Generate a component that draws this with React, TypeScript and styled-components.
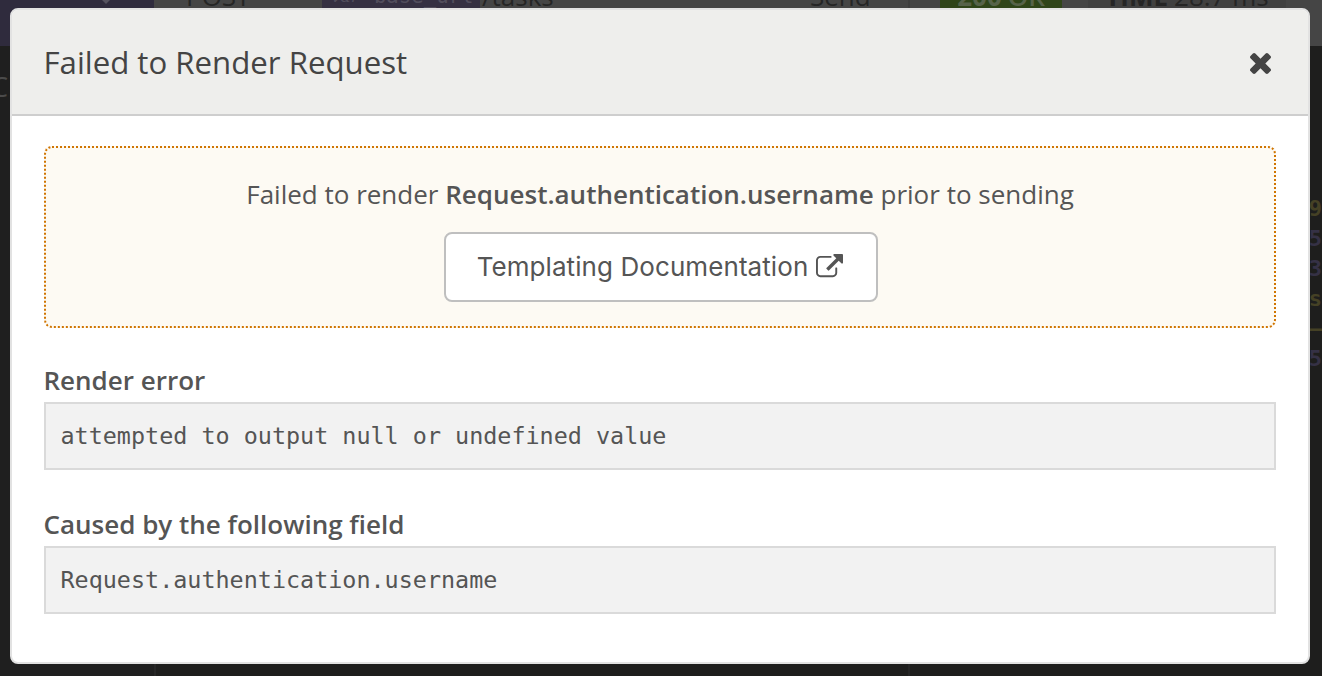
import React from 'react';
import styled, { createGlobalStyle } from 'styled-components';

const GlobalStyle = createGlobalStyle`
  * { box-sizing: border-box; }
  html, body { margin: 0; overflow: hidden; background: #1e1e1d; }
`;

const Screen = styled.div`
  position: relative;
  width: 1322px;
  height: 676px;
  overflow: hidden;
  font-family: 'Open Sans', 'Noto Sans', sans-serif;
  font-size: 26px;
  color: #555;
`;

const Workspace = styled.div`
  display: flex;
  flex-direction: column;
  height: 100%;
`;

const TopBar = styled.div`
  display: flex;
  flex: none;
  height: 98px;
  margin-top: -52px;
  background: #454545;
  color: #252525;
  white-space: nowrap;
`;

const BarCell = styled.div<{ $w: number; $bg?: string; $pad?: number }>`
  display: flex;
  flex: none;
  align-items: center;
  width: ${p => p.$w}px;
  padding-left: ${p => p.$pad ?? 0}px;
  padding-bottom: 2px;
  background: ${p => p.$bg ?? 'transparent'};
`;

const MenuCell = styled(BarCell)`
  padding-bottom: 0;
  padding-top: 6px;
`;

const SendCell = styled(BarCell)`
  border-right: 2px solid #3e3e3e;
`;

const Tag = styled.span`
  display: flex;
  flex: none;
  align-items: center;
  gap: 15px;
  width: 158px;
  height: 50px;
  padding-left: 9px;
  margin-right: 2px;
  background: #353042;
  color: #514d5c;
  font: 20.7px 'DejaVu Sans Mono', monospace;
`;

const TagKind = styled.i`
  font-family: 'DejaVu Serif', serif;
  font-size: 17px;
`;

const Badge = styled.span<{ $w: number; $bg: string; $fg: string }>`
  display: flex;
  flex: none;
  align-items: center;
  justify-content: center;
  gap: 6px;
  width: ${p => p.$w}px;
  height: 66px;
  background: ${p => p.$bg};
  color: ${p => p.$fg};
`;

const StatusText = styled.span`
  font-weight: 600;
`;

const Panes = styled.div`
  display: flex;
  flex: 1;
`;

const Sidebar = styled.div`
  width: 156px;
  padding-top: 22px;
  border-right: 2px solid #272727;
  background: #1f1f1f;
  color: #4b4b4b;
  font-size: 27px;
`;

const SidebarText = styled.div`
  margin-left: -9px;
`;

const Editor = styled.div`
  width: 754px;
  border-right: 2px solid #252525;
`;

const Response = styled.div`
  flex: 1;
  display: flex;
  flex-direction: column;
  align-items: flex-end;
  padding-top: 148px;
  font: bold 22px/30px 'DejaVu Sans Mono', monospace;
`;

const CodeEnd = styled.div<{ $fg: string }>`
  height: 30px;
  color: ${p => p.$fg};
`;

const Modal = styled.section`
  position: absolute;
  top: 8px;
  left: 10px;
  display: flex;
  flex-direction: column;
  width: 1300px;
  height: 656px;
  overflow: hidden;
  border: 2px solid #e2e2e2;
  border-radius: 8px;
  background: #fff;
`;

const ModalHeader = styled.header`
  display: flex;
  flex: none;
  align-items: center;
  justify-content: space-between;
  height: 106px;
  padding: 0 37px 0 31.5px;
  border-bottom: 2px solid #cecece;
  background: #eeeeec;
  color: #444;
`;

const Title = styled.h1`
  margin: 0;
  font-size: 31.2px;
  font-weight: 400;
  line-height: 40px;
`;

const CloseButton = styled.button`
  display: flex;
  padding: 3px 0 0;
  border: 0;
  background: none;
  color: #444;
`;

const ModalBody = styled.div`
  padding: 30px 32px;
`;

const Notice = styled.div`
  display: flex;
  flex-direction: column;
  align-items: center;
  height: 182px;
  padding-top: 26px;
  border: 2px dotted #d07502;
  border-radius: 8px;
  background: #fdfaf3;
`;

const Message = styled.p`
  margin: 0 0 18px;
  font-size: 26px;
  line-height: 40px;
  white-space: nowrap;

  strong { font-weight: 600; }
`;

const DocsButton = styled.button`
  display: flex;
  align-items: center;
  justify-content: center;
  gap: 8px;
  width: 434px;
  height: 70px;
  margin-left: 2px;
  padding: 0 2px 2px 0;
  border: 2px solid #bfbfbf;
  border-radius: 8px;
  background: #fff;
  color: #555;
  font: 26px Inter, sans-serif;
  letter-spacing: 0.08px;
  white-space: nowrap;

  svg { margin-top: 2px; }
`;

const Field = styled.div`
  margin-top: 34px;

  & + & { margin-top: 36px; }
`;

const Label = styled.div`
  height: 40px;
  margin-left: -0.5px;
  font-size: 26px;
  font-weight: 600;
  line-height: 36px;
`;

const Code = styled.pre`
  height: 68px;
  margin: 0;
  padding: 0 14.5px;
  border: 2px solid #dadada;
  background: #f2f2f2;
  font: 23.42px/64px 'DejaVu Sans Mono', monospace;
`;

const CloseIcon = () => (
  <svg width="21" height="21" viewBox="302 366 1188 1188" fill="currentColor">
    <path d="M1490 1322q0 40-28 68l-136 136q-28 28-68 28t-68-28l-294-294-294 294q-28 28-68 28t-68-28l-136-136q-28-28-28-68t28-68l294-294-294-294q-28-28-28-68t28-68l136-136q28-28 68-28t68 28l294 294 294-294q28-28 68-28t68 28l136 136q28 28 28 68t-28 68l-294 294 294 294q28 28 28 68z" />
  </svg>
);

const ExternalLinkIcon = () => (
  <svg width="27" height="27" viewBox="0 0 1792 1792" fill="currentColor">
    <path d="M1408 928v320q0 119-84.5 203.5t-203.5 84.5h-832q-119 0-203.5-84.5t-84.5-203.5v-832q0-119 84.5-203.5t203.5-84.5h704q14 0 23 9t9 23v64q0 14-9 23t-23 9h-704q-66 0-113 47t-47 113v832q0 66 47 113t113 47h832q66 0 113-47t47-113v-320q0-14 9-23t23-9h64q14 0 23 9t9 23zm384-864v512q0 26-19 45t-45 19-45-19l-176-176-652 652q-10 10-23 10t-23-10l-114-114q-10-10-10-23t10-23l652-652-176-176q-19-19-19-45t19-45 45-19h512q26 0 45 19t19 45z" />
  </svg>
);

const CaretIcon = () => (
  <svg width="16" height="8" viewBox="0 0 16 8" fill="#55525f">
    <path d="M0 0h16l-8 8z" />
  </svg>
);

export default function App() {
  return (
    <Screen>
      <GlobalStyle />
      <Workspace>
        <TopBar>
          <MenuCell $w={154} $bg="#2f2b3d" $pad={98}><CaretIcon /></MenuCell>
          <BarCell $w={168} $pad={32}>POST</BarCell>
          <BarCell $w={488}>
            <Tag><TagKind>var</TagKind>base_url</Tag>/tasks
          </BarCell>
          <SendCell $w={100}>Send</SendCell>
          <BarCell $w={148} $pad={30}>
            <Badge $w={122} $bg="#2f4419" $fg="#566249"><b>200</b><StatusText>OK</StatusText></Badge>
          </BarCell>
          <BarCell $w={230} $pad={30}>
            <Badge $w={198} $bg="#404040" $fg="#252525"><b>TIME</b>28.7 ms</Badge>
          </BarCell>
        </TopBar>
        <Panes>
          <Sidebar><SidebarText>C</SidebarText></Sidebar>
          <Editor />
          <Response>
            <CodeEnd $fg="#454125">9</CodeEnd>
            <CodeEnd $fg="#353145">5</CodeEnd>
            <CodeEnd $fg="#353145">3</CodeEnd>
            <CodeEnd $fg="#454125">s</CodeEnd>
            <CodeEnd $fg="#454125">—</CodeEnd>
            <CodeEnd $fg="#353145">5</CodeEnd>
          </Response>
        </Panes>
      </Workspace>
      <Modal>
        <ModalHeader>
          <Title>Failed to Render Request</Title>
          <CloseButton aria-label="Close"><CloseIcon /></CloseButton>
        </ModalHeader>
        <ModalBody>
          <Notice>
            <Message>
              Failed to render <strong>Request.authentication.username</strong> prior to sending
            </Message>
            <DocsButton>Templating Documentation<ExternalLinkIcon /></DocsButton>
          </Notice>
          <Field>
            <Label>Render error</Label>
            <Code>attempted to output null or undefined value</Code>
          </Field>
          <Field>
            <Label>Caused by the following field</Label>
            <Code>Request.authentication.username</Code>
          </Field>
        </ModalBody>
      </Modal>
    </Screen>
  );
}
